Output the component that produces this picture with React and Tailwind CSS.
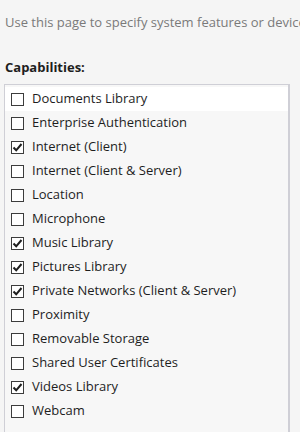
import React from 'react';

const capabilities = [
  { name: 'Documents Library', checked: false },
  { name: 'Enterprise Authentication', checked: false },
  { name: 'Internet (Client)', checked: true },
  { name: 'Internet (Client & Server)', checked: false },
  { name: 'Location', checked: false },
  { name: 'Microphone', checked: false },
  { name: 'Music Library', checked: true },
  { name: 'Pictures Library', checked: true },
  { name: 'Private Networks (Client & Server)', checked: true },
  { name: 'Proximity', checked: false },
  { name: 'Removable Storage', checked: false },
  { name: 'Shared User Certificates', checked: false },
  { name: 'Videos Library', checked: true },
  { name: 'Webcam', checked: false },
];

const CheckBox = ({ checked }) => (
  <div className="w-[13px] h-[13px] border border-[#3c3c3c] bg-white flex items-center justify-center shrink-0">
    {checked && (
      <svg width="11" height="11" viewBox="0 0 11 11">
        <path d="M1.5 5.5 L4.2 8.3 L9.5 2" fill="none" stroke="#1e1e1e" strokeWidth="2" />
      </svg>
    )}
  </div>
);

export default function App() {
  return (
    <div className="w-[300px] h-[432px] overflow-hidden bg-[#f5f5f5] font-['Open_Sans',sans-serif]">
      <p className="pl-[5px] pt-[13px] text-[13px] leading-[18px] text-[#7a7a7a] whitespace-nowrap">
        Use this page to specify system features or device
      </p>
      <h3 className="pl-[5px] mt-[27px] text-[13px] leading-[18px] font-bold text-[#1e1e1e]">
        Capabilities:
      </h3>
      <div className="ml-[4px] mt-[8px] w-[286px] h-[400px] border border-[#cfcfd6] border-r-2 bg-[#f7f7f7] pt-[2px]">
        {capabilities.map((cap, i) => (
          <div
            key={cap.name}
            className={`h-[24px] flex items-center pl-[6px] gap-[8px] ${i === 0 ? 'bg-white' : ''}`}
          >
            <CheckBox checked={cap.checked} />
            <span className="text-[13px] text-[#1e1e1e] whitespace-nowrap">{cap.name}</span>
          </div>
        ))}
      </div>
    </div>
  );
}
